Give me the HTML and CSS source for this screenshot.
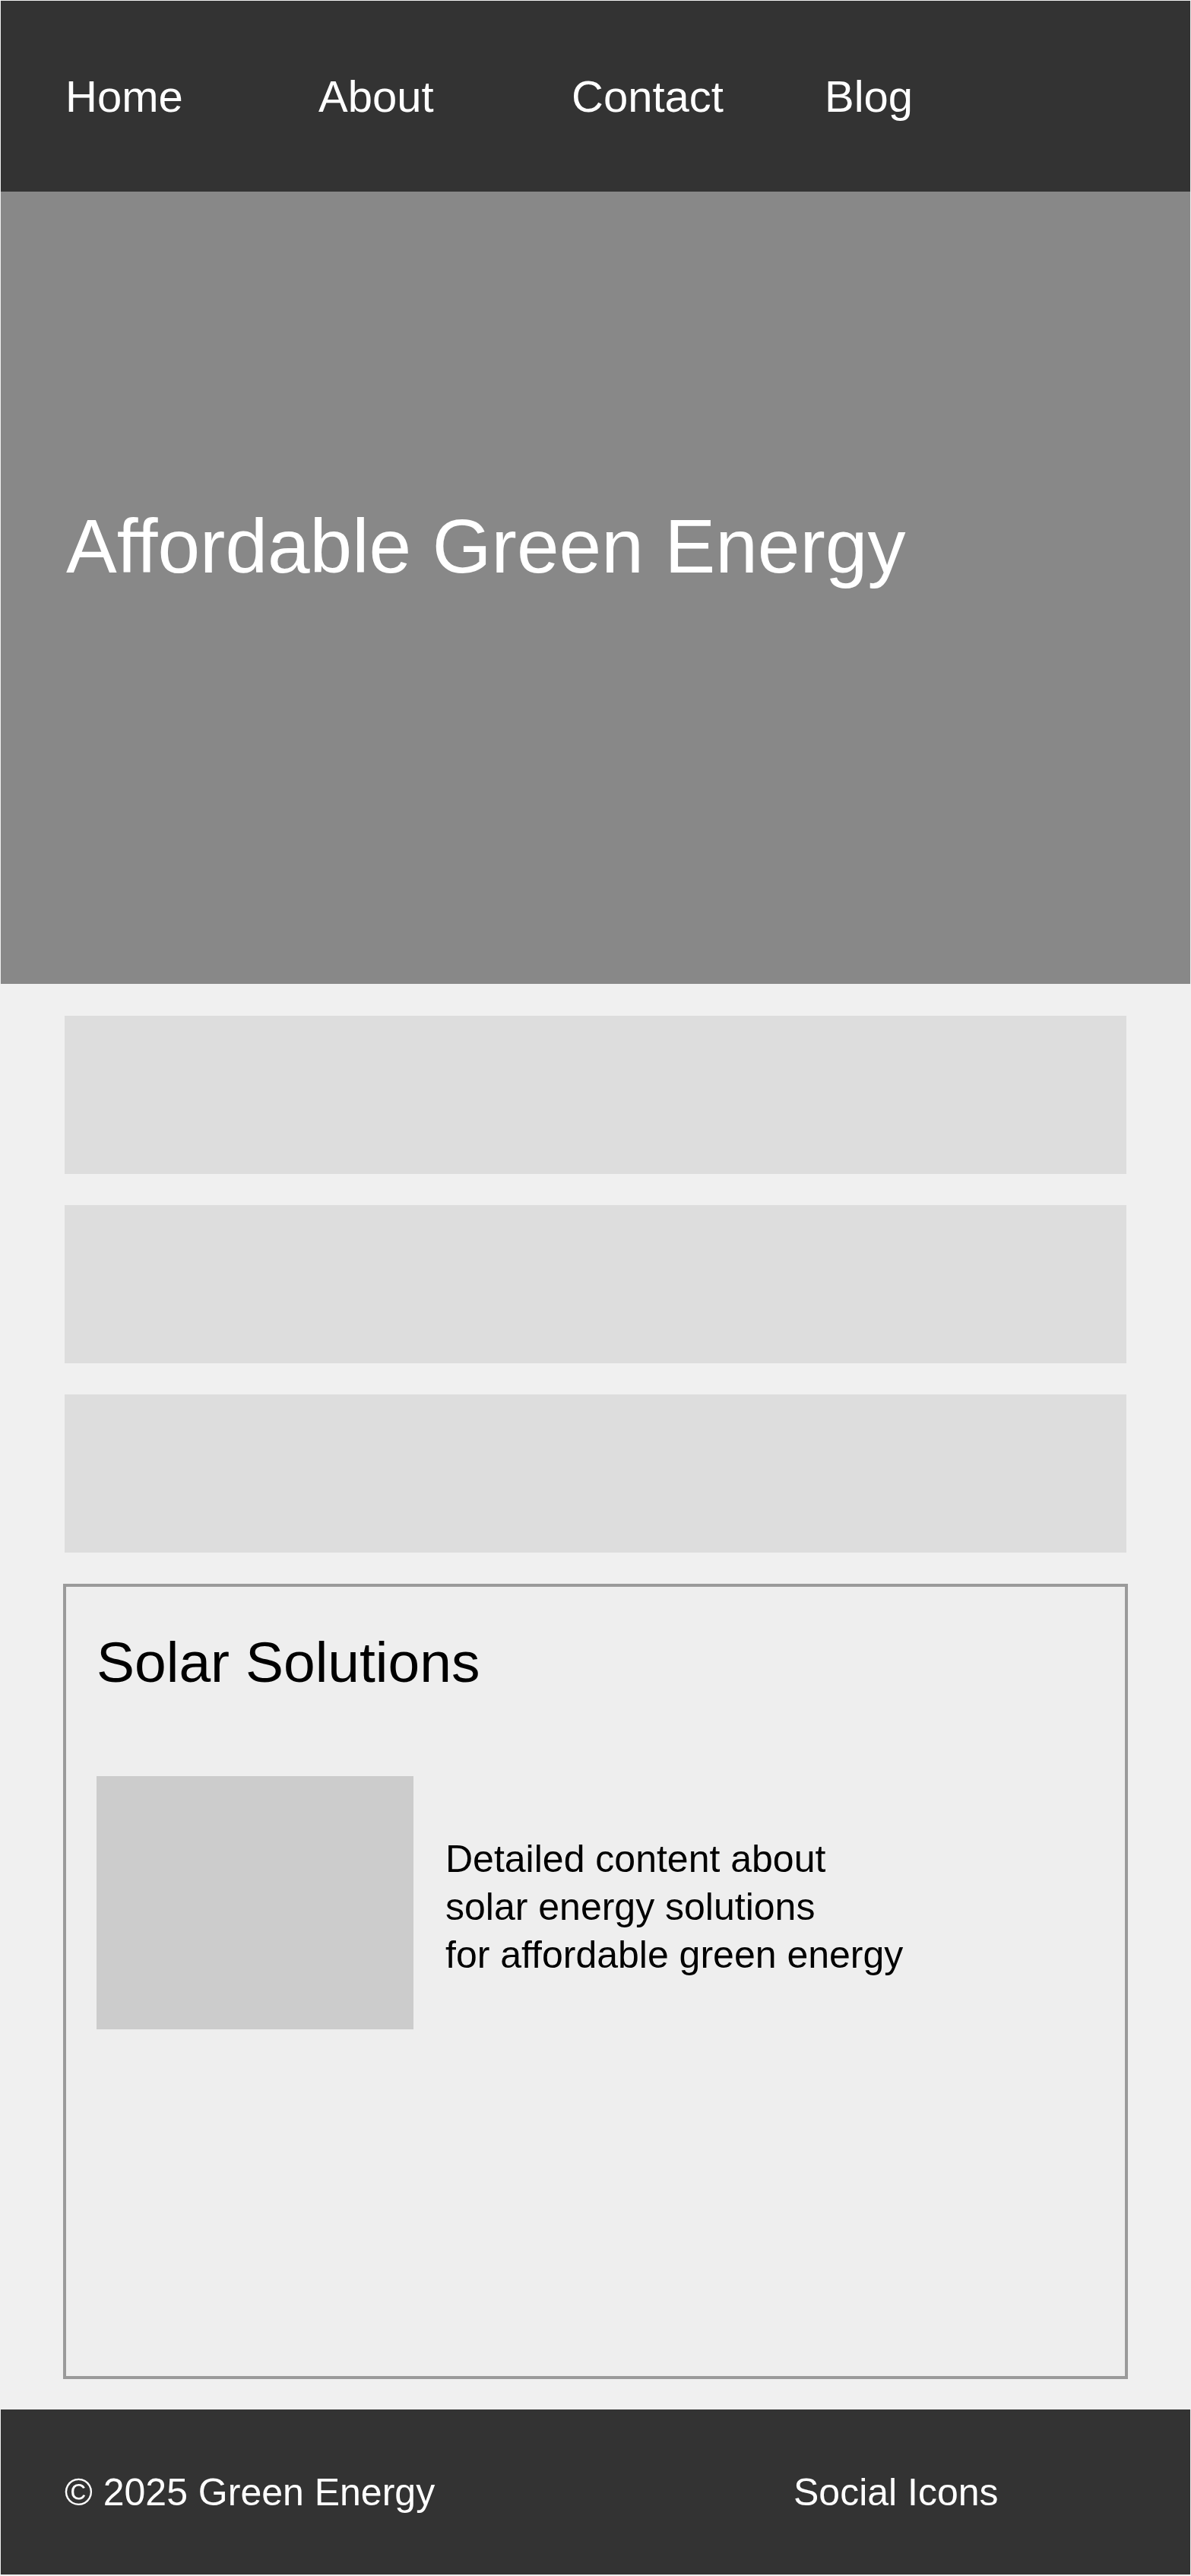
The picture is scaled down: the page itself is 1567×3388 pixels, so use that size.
FILE: index.html
```html
<!DOCTYPE html>
<html lang="en">
<head>
<meta charset="utf-8">
<title>Affordable Green Energy</title>
<link rel="stylesheet" href="styles.css">
</head>
<body>
<header class="site-header">
  <nav class="nav">
    <a class="nav-link" href="#">Home</a>
    <a class="nav-link" href="#">About</a>
    <a class="nav-link" href="#">Contact</a>
    <a class="nav-link" href="#">Blog</a>
  </nav>
</header>
<section class="hero">
  <h1 class="hero-title">Affordable Green Energy</h1>
</section>
<main class="main">
  <div class="block"></div>
  <div class="block"></div>
  <div class="block"></div>
  <section class="solar">
    <h2 class="solar-title">Solar Solutions</h2>
    <div class="solar-row">
      <div class="solar-image"></div>
      <p class="solar-text">Detailed content about<br>solar energy solutions<br>for affordable green energy</p>
    </div>
  </section>
</main>
<footer class="site-footer">
  <span class="footer-copy">© 2025 Green Energy</span>
  <span class="footer-social">Social Icons</span>
</footer>
</body>
</html>
```
FILE: styles.css
```css
html {
  background: #f0f0f0;
}
body {
  margin: 1px;
  font-family: "Liberation Sans", Arial, sans-serif;
  background: #f0f0f0;
}
.site-header {
  background: #333333;
  height: 251px;
  display: flex;
  align-items: center;
  padding: 0 85px;
}
.nav {
  display: flex;
}
.nav-link {
  width: 333px;
  color: #ffffff;
  text-decoration: none;
  font-size: 58px;
  line-height: normal;
}
.hero {
  background: #888888;
  height: 1042px;
  box-sizing: border-box;
  padding: 409px 86px 0;
}
.hero-title {
  margin: 0;
  color: #ffffff;
  font-size: 100px;
  font-weight: normal;
  line-height: normal;
}
.main {
  display: flex;
  flex-direction: column;
  gap: 41px;
  padding: 42px 84px 40px;
}
.block {
  height: 208px;
  background: #dddddd;
}
.solar {
  margin: 0 -2px;
  height: 1046px;
  box-sizing: border-box;
  border: 4px solid #9a9a9a;
  background: #eeeeee;
  padding: 40px;
}
.solar-title {
  margin: 16px 0 0;
  font-size: 75px;
  font-weight: normal;
  line-height: normal;
  color: #000000;
}
.solar-row {
  display: flex;
  align-items: center;
  gap: 42px;
  margin-top: 107px;
}
.solar-image {
  width: 417px;
  height: 333px;
  background: #cccccc;
  flex: none;
}
.solar-text {
  margin: 0;
  padding-top: 12px;
  font-size: 50px;
  line-height: 63px;
  color: #000000;
}
.site-footer {
  background: #333333;
  height: 217px;
  display: grid;
  grid-template-columns: 959px auto;
  align-items: center;
  padding: 0 84px;
  color: #ffffff;
  font-size: 50px;
}
```
